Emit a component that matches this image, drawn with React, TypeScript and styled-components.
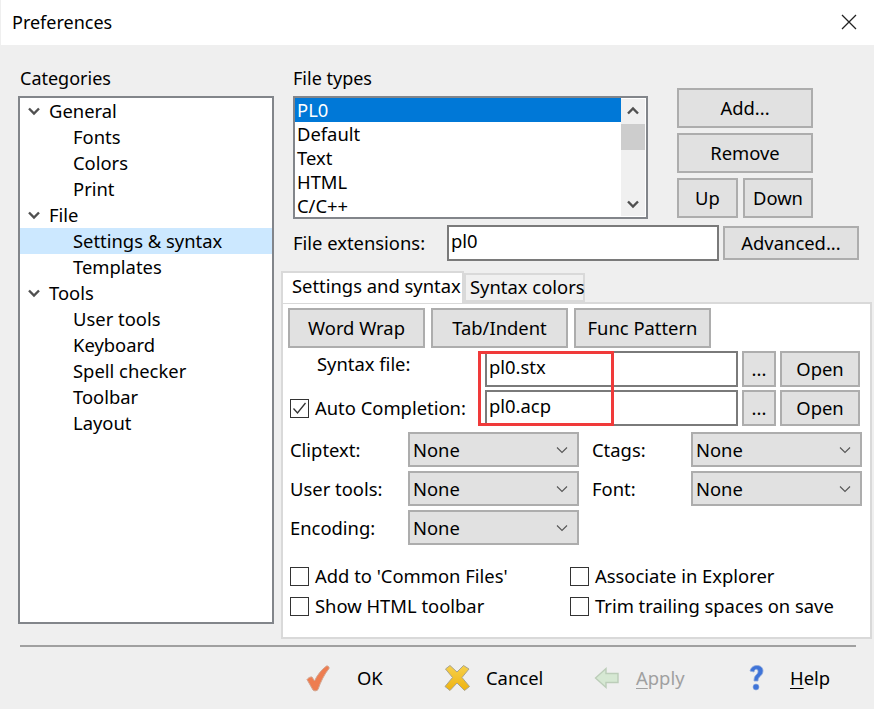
import styled, { createGlobalStyle } from 'styled-components';

const Global = createGlobalStyle`
  html, body {
    margin: 0;
    padding: 0;
    background: #f0f0f0;
  }
  * {
    box-sizing: border-box;
  }
`;

const Dialog = styled.div`
  width: 874px;
  height: 709px;
  background: #efefef;
  color: #000;
  font-family: "Noto Sans", "Open Sans", sans-serif;
  font-size: 18.4px;
  line-height: 26px;
  overflow: hidden;
`;

const TitleBar = styled.div`
  height: 45px;
  margin-left: 1px;
  padding: 0 17px 2px 11px;
  background: #fff;
  font-size: 18px;
  display: flex;
  align-items: center;
  justify-content: space-between;
`;

const Body = styled.div`
  display: flex;
  height: 600px;
  padding-top: 20px;
`;

const LeftCol = styled.div`
  width: 281px;
  padding-left: 18px;
  flex: none;
  display: flex;
  flex-direction: column;
`;

const RightCol = styled.div`
  flex: 1;
  display: flex;
  flex-direction: column;
`;

const GroupLabel = styled.div<{ $indent?: number }>`
  height: 31px;
  font-size: 18px;
  padding-left: ${(p) => p.$indent ?? 2}px;
`;

const Tree = styled.div`
  width: 256px;
  height: 528px;
  background: #fff;
  border: 2px solid #82858a;
`;

const TreeRow = styled.div<{ $depth: number; $selected?: boolean }>`
  height: 26px;
  display: flex;
  align-items: center;
  padding-left: ${(p) => (p.$depth === 0 ? 7 : 53)}px;
  background: ${(p) => (p.$selected ? '#cce8ff' : 'transparent')};
  gap: 8px;
`;

const TopArea = styled.div`
  display: flex;
  padding-left: 12px;
  height: 160px;
`;

const ListCol = styled.div`
  width: 384px;
  flex: none;
`;

const ListBox = styled.div`
  width: 355px;
  height: 123px;
  background: #fff;
  border: 2px solid #82858a;
  display: flex;
`;

const ListItems = styled.div`
  flex: 1;
`;

const ListItem = styled.div<{ $selected?: boolean }>`
  height: 24px;
  line-height: 24px;
  padding-left: 2px;
  background: ${(p) => (p.$selected ? '#0078d7' : 'transparent')};
  color: ${(p) => (p.$selected ? '#fff' : '#000')};
`;

const ScrollBar = styled.div`
  width: 24px;
  margin: 1px 1px 1px 0;
  background: #f0f0f0;
  display: flex;
  flex-direction: column;
  justify-content: space-between;
  align-items: center;
  position: relative;
  padding: 7px 0;
`;

const ScrollThumb = styled.div`
  position: absolute;
  top: 25px;
  left: 0;
  width: 24px;
  height: 26px;
  background: #cdcdcd;
`;

const Btn = styled.div<{ $w?: number; $h?: number }>`
  width: ${(p) => (p.$w ? `${p.$w}px` : 'auto')};
  height: ${(p) => p.$h ?? 40}px;
  flex: none;
  background: #e1e1e1;
  border: 2px solid #adadad;
  display: flex;
  align-items: center;
  justify-content: center;
`;

const SideButtons = styled.div`
  display: flex;
  flex-direction: column;
  gap: 5px;
  margin-top: 23px;
`;

const BtnRow = styled.div`
  display: flex;
  gap: 5px;
`;

const ExtRow = styled.div`
  display: flex;
  align-items: center;
  gap: 4px;
  padding-left: 12px;
  height: 36px;
`;

const ExtLabel = styled.div`
  width: 150px;
  flex: none;
`;

const TextBox = styled.div<{ $w: number; $h?: number }>`
  width: ${(p) => p.$w}px;
  height: ${(p) => p.$h ?? 36}px;
  flex: none;
  background: #fff;
  border: 2px solid #7a7a7a;
  padding: 0 0 4px 2px;
  display: flex;
  align-items: center;
`;

const Tabs = styled.div`
  display: flex;
  align-items: flex-end;
  margin-top: 9px;
  height: 32px;
  position: relative;
  z-index: 1;
`;

const Tab = styled.div<{ $active?: boolean }>`
  height: ${(p) => (p.$active ? 32 : 29)}px;
  width: ${(p) => (p.$active ? 183 : 121)}px;
  background: ${(p) => (p.$active ? '#fff' : '#f0f0f0')};
  border: 2px solid #d9d9d9;
  border-bottom: ${(p) => (p.$active ? 'none' : '2px solid #d9d9d9')};
  margin-bottom: ${(p) => (p.$active ? -1 : 0)}px;
  padding-left: ${(p) => (p.$active ? 9 : 4)}px;
  padding-bottom: ${(p) => (p.$active ? 4 : 2)}px;
  display: flex;
  align-items: center;
  white-space: nowrap;
`;

const Panel = styled.div`
  width: 591px;
  height: 337px;
  background: #fff;
  border: 2px solid #d9d9d9;
  padding: 4px 0 0 5px;
  position: relative;
`;

const ActionRow = styled.div`
  display: flex;
  gap: 6px;
`;

const FileRow = styled.div`
  display: flex;
  align-items: center;
  height: 36px;
  margin-top: 3px;
  gap: 4px;
`;

const FileLabel = styled.div<{ $indent?: number; $raised?: boolean }>`
  width: 193px;
  flex: none;
  display: flex;
  align-items: center;
  gap: 6px;
  padding-left: ${(p) => p.$indent ?? 0}px;
  padding-bottom: ${(p) => (p.$raised ? 10 : 0)}px;
  white-space: nowrap;
`;

const Highlight = styled.div`
  position: absolute;
  left: 195px;
  top: 47px;
  width: 136px;
  height: 75px;
  border: 3px solid #f03a3a;
`;

const ComboGrid = styled.div`
  display: grid;
  grid-template-columns: 118px 171px 13px 99px 171px;
  grid-auto-rows: 35px;
  row-gap: 4px;
  align-items: center;
  margin-top: 6px;
  margin-left: 2px;
`;

const Combo = styled.div`
  height: 35px;
  background: #e1e1e1;
  border: 2px solid #adadad;
  display: flex;
  align-items: center;
  justify-content: space-between;
  padding: 0 9px 0 3px;
`;

const CheckGrid = styled.div`
  display: grid;
  grid-template-columns: 280px 1fr;
  grid-auto-rows: 30px;
  margin: 16px 0 0 2px;
`;

const CheckItem = styled.div`
  display: flex;
  align-items: center;
  gap: 6px;
  white-space: nowrap;
`;

const Check = styled.div`
  width: 19px;
  height: 19px;
  flex: none;
  background: #fff;
  border: 1.5px solid #333;
  display: flex;
  align-items: center;
  justify-content: center;
`;

const Separator = styled.div`
  height: 2px;
  margin: 0 18px 0 20px;
  background: #a0a0a0;
`;

const Footer = styled.div`
  display: flex;
  align-items: center;
  height: 62px;
  padding-left: 305px;
`;

const FooterAction = styled.div<{ $w: number; $gap: number; $disabled?: boolean }>`
  width: ${(p) => p.$w}px;
  flex: none;
  display: flex;
  align-items: center;
  gap: ${(p) => p.$gap}px;
  color: ${(p) => (p.$disabled ? '#a0a0a0' : '#000')};
  u {
    text-underline-offset: 3px;
  }
`;

const Chevron = ({ down = true }: { down?: boolean }) => (
  <svg width="14" height="10" viewBox="0 0 14 10">
    <path
      d={down ? 'M2 2.5l5 5 5-5' : 'M2 7.5l5-5 5 5'}
      fill="none"
      stroke="#505050"
      strokeWidth="2.4"
    />
  </svg>
);

const ComboArrow = () => (
  <svg width="12" height="8" viewBox="0 0 12 8">
    <path d="M1 1.5l5 5 5-5" fill="none" stroke="#555" strokeWidth="1.1" />
  </svg>
);

const CloseIcon = () => (
  <svg width="16" height="16" viewBox="0 0 16 16">
    <path d="M1 1l14 14M15 1L1 15" stroke="#222" strokeWidth="1.3" />
  </svg>
);

const OkIcon = () => (
  <svg width="26" height="28" viewBox="0 0 26 28">
    <path
      d="M2 15.500c1-1.500 3.500-3 5-2.500l2.500 4C12 11.500 16.500 5.500 21.500 2c1.500-.5 3 1 2.500 2.500C19.500 10 15.500 18 13 25.500c-.8 1.500-4 1.800-5 .5z"
      fill="#ee7d50"
      stroke="#d3a48e"
      strokeWidth="1"
    />
  </svg>
);

const CancelIcon = () => (
  <svg width="26" height="28" viewBox="0 0 26 28">
    <defs>
      <linearGradient id="cancelFill" x1="0" y1="0" x2="0" y2="1">
        <stop offset="0" stopColor="#f6d04c" />
        <stop offset="1" stopColor="#eeb30f" />
      </linearGradient>
    </defs>
    <path
      d="M1.500 5L6 1.500l7 6.500 6.500-6.500L25 5l-7 8.500 7.500 9-5 4L13 19l-7 7.500-5-4 7.500-9z"
      fill="url(#cancelFill)"
      stroke="#aaa38c"
      strokeWidth="1"
    />
  </svg>
);

const ApplyIcon = () => (
  <svg width="26" height="28" viewBox="0 0 26 28">
    <path
      d="M1.500 14L12 4.500v5h12v9H12v5z"
      fill="#d6e8d3"
      stroke="#bccdb9"
      strokeWidth="1.4"
    />
  </svg>
);

const HelpIcon = () => (
  <svg width="16" height="28" viewBox="0 0 16 28">
    <path
      d="M2 7c1-4 4-5.500 7-5.500 4 0 6 2.500 6 5.500 0 3-2 4.500-3.500 6-1 1-1.500 2-1.500 4H6c0-3 .5-4.500 2-6 1-1 2-2 2-3.500 0-1.500-.8-2.200-1.800-2.200C7 5.300 6.200 6.500 6 8z"
      fill="#3f74d8"
      stroke="#8fa9dc"
      strokeWidth="0.8"
    />
    <circle cx="8" cy="23" r="3" fill="#3f74d8" stroke="#8fa9dc" strokeWidth="0.6" />
  </svg>
);

const treeItems = [
  { text: 'General', depth: 0 },
  { text: 'Fonts', depth: 1 },
  { text: 'Colors', depth: 1 },
  { text: 'Print', depth: 1 },
  { text: 'File', depth: 0 },
  { text: 'Settings & syntax', depth: 1, selected: true },
  { text: 'Templates', depth: 1 },
  { text: 'Tools', depth: 0 },
  { text: 'User tools', depth: 1 },
  { text: 'Keyboard', depth: 1 },
  { text: 'Spell checker', depth: 1 },
  { text: 'Toolbar', depth: 1 },
  { text: 'Layout', depth: 1 },
];

const comboRows = [
  ['Cliptext:', 'Ctags:'],
  ['User tools:', 'Font:'],
  ['Encoding:'],
];

function App() {
  return (
    <Dialog>
      <Global />
      <TitleBar>
        <span>Preferences</span>
        <CloseIcon />
      </TitleBar>
      <Body>
        <LeftCol>
          <GroupLabel>Categories</GroupLabel>
          <Tree>
            {treeItems.map((item) => (
              <TreeRow key={item.text} $depth={item.depth} $selected={item.selected}>
                {item.depth === 0 && <Chevron />}
                {item.text}
              </TreeRow>
            ))}
          </Tree>
        </LeftCol>
        <RightCol>
          <TopArea>
            <ListCol>
              <GroupLabel $indent={0}>File types</GroupLabel>
              <ListBox>
                <ListItems>
                  <ListItem $selected>PL0</ListItem>
                  <ListItem>Default</ListItem>
                  <ListItem>Text</ListItem>
                  <ListItem>HTML</ListItem>
                  <ListItem>C/C++</ListItem>
                </ListItems>
                <ScrollBar>
                  <Chevron down={false} />
                  <ScrollThumb />
                  <Chevron />
                </ScrollBar>
              </ListBox>
            </ListCol>
            <SideButtons>
              <Btn $w={136}>Add...</Btn>
              <Btn $w={136}>Remove</Btn>
              <BtnRow>
                <Btn $w={61}>Up</Btn>
                <Btn $w={70}>Down</Btn>
              </BtnRow>
            </SideButtons>
          </TopArea>
          <ExtRow>
            <ExtLabel>File extensions:</ExtLabel>
            <TextBox $w={272}>pl0</TextBox>
            <Btn $w={136} $h={34}>Advanced...</Btn>
          </ExtRow>
          <Tabs>
            <Tab $active>Settings and syntax</Tab>
            <Tab>Syntax colors</Tab>
          </Tabs>
          <Panel>
            <ActionRow>
              <Btn $w={137}>Word Wrap</Btn>
              <Btn $w={137}>Tab/Indent</Btn>
              <Btn $w={137}>Func Pattern</Btn>
            </ActionRow>
            <FileRow>
              <FileLabel $indent={29} $raised>Syntax file:</FileLabel>
              <TextBox $w={253}>pl0.stx</TextBox>
              <Btn $w={34} $h={36}>...</Btn>
              <Btn $w={80} $h={36}>Open</Btn>
            </FileRow>
            <FileRow>
              <FileLabel $indent={2}>
                <Check>
                  <svg width="15" height="13" viewBox="0 0 15 13">
                    <path d="M1.500 6.500l4 4.500 8-10" fill="none" stroke="#333" strokeWidth="1.3" />
                  </svg>
                </Check>
                Auto Completion:
              </FileLabel>
              <TextBox $w={253}>pl0.acp</TextBox>
              <Btn $w={34} $h={36}>...</Btn>
              <Btn $w={80} $h={36}>Open</Btn>
            </FileRow>
            <Highlight />
            <ComboGrid>
              {comboRows.flatMap((row) => [
                <span key={row[0]}>{row[0]}</span>,
                <Combo key={`${row[0]}-combo`}>None<ComboArrow /></Combo>,
                <span key={`${row[0]}-gap`} />,
                row[1] ? <span key={row[1]}>{row[1]}</span> : null,
                row[1] ? <Combo key={`${row[1]}-combo`}>None<ComboArrow /></Combo> : null,
              ])}
            </ComboGrid>
            <CheckGrid>
              <CheckItem><Check />Add to 'Common Files'</CheckItem>
              <CheckItem><Check />Associate in Explorer</CheckItem>
              <CheckItem><Check />Show HTML toolbar</CheckItem>
              <CheckItem><Check />Trim trailing spaces on save</CheckItem>
            </CheckGrid>
          </Panel>
        </RightCol>
      </Body>
      <Separator />
      <Footer>
        <FooterAction $w={139} $gap={26}><OkIcon />OK</FooterAction>
        <FooterAction $w={150} $gap={16}><CancelIcon />Cancel</FooterAction>
        <FooterAction $w={154} $gap={16} $disabled><ApplyIcon /><span><u>A</u>pply</span></FooterAction>
        <FooterAction $w={100} $gap={26}><HelpIcon /><span><u>H</u>elp</span></FooterAction>
      </Footer>
    </Dialog>
  );
}

export default App;
